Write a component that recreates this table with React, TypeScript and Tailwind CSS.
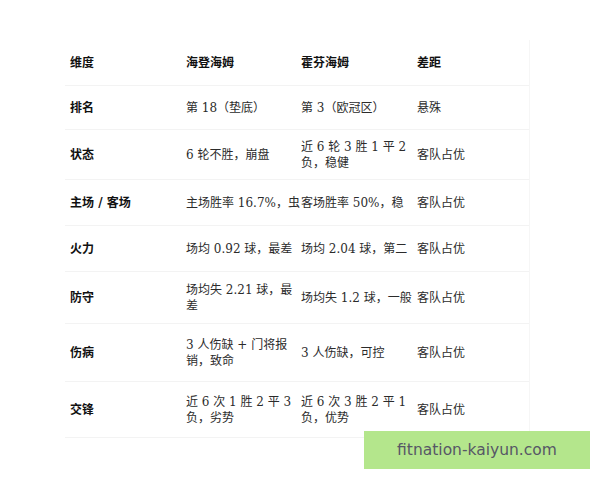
import React from 'react';

interface Row {
  dim: string;
  home: string;
  away: string;
  gap: string;
  h: string;
}

const rows: Row[] = [
  { dim: '排名', home: '第 18（垫底）', away: '第 3（欧冠区）', gap: '悬殊', h: 'h-[44px]' },
  { dim: '状态', home: '6 轮不胜，崩盘', away: '近 6 轮 3 胜 1 平 2 负，稳健', gap: '客队占优', h: 'h-[50px]' },
  { dim: '主场 / 客场', home: '主场胜率 16.7%，虫', away: '客场胜率 50%，稳', gap: '客队占优', h: 'h-[46px]' },
  { dim: '火力', home: '场均 0.92 球，最差', away: '场均 2.04 球，第二', gap: '客队占优', h: 'h-[46px]' },
  { dim: '防守', home: '场均失 2.21 球，最差', away: '场均失 1.2 球，一般', gap: '客队占优', h: 'h-[52px]' },
  { dim: '伤病', home: '3 人伤缺 + 门将报销，致命', away: '3 人伤缺，可控', gap: '客队占优', h: 'h-[58px]' },
  { dim: '交锋', home: '近 6 次 1 胜 2 平 3 负，劣势', away: '近 6 次 3 胜 2 平 1 负，优势', gap: '客队占优', h: 'h-[56px]' },
];

const cell = 'pl-[5px] flex items-center';

export default function App() {
  return (
    <div
      className="relative w-[600px] h-[480px] bg-white overflow-hidden text-[12px] leading-[16px] text-[#2b2b2b]"
      style={{ fontFamily: '"DejaVu Serif", "Noto Sans CJK SC", serif' }}
    >
      <div className="ml-[65px] mt-[40px] w-[465px] border-r border-[#f6f6f6]">
        <div className="grid grid-cols-[116px_115px_116px_118px] h-[46px] border-b border-[#f3f3f3] font-bold text-[#111]">
          <div className={cell}>维度</div>
          <div className={cell}>海登海姆</div>
          <div className={cell}>霍芬海姆</div>
          <div className={cell}>差距</div>
        </div>
        {rows.map((r) => (
          <div
            key={r.dim}
            className={`grid grid-cols-[116px_115px_116px_118px] ${r.h} border-b border-[#f3f3f3]`}
          >
            <div className={`${cell} font-bold text-[#111]`}>{r.dim}</div>
            <div className={cell}>
              <span
                className={
                  r.dim === '主场 / 客场' ? 'whitespace-nowrap' : r.dim === '防守' ? 'break-all' : ''
                }
              >
                {r.home}
              </span>
            </div>
            <div className={cell}>
              <span className={r.dim === '主场 / 客场' || r.dim === '防守' ? 'whitespace-nowrap' : ''}>
                {r.away}
              </span>
            </div>
            <div className={cell}>{r.gap}</div>
          </div>
        ))}
      </div>

      <div
        className="absolute left-[364px] top-[431px] w-[226px] h-[38px] bg-[#b4e68c] flex items-center justify-center text-[15.5px] text-[#575766]"
        style={{ fontFamily: '"DejaVu Sans", sans-serif' }}
      >
        fitnation-kaiyun.com
      </div>
    </div>
  );
}
